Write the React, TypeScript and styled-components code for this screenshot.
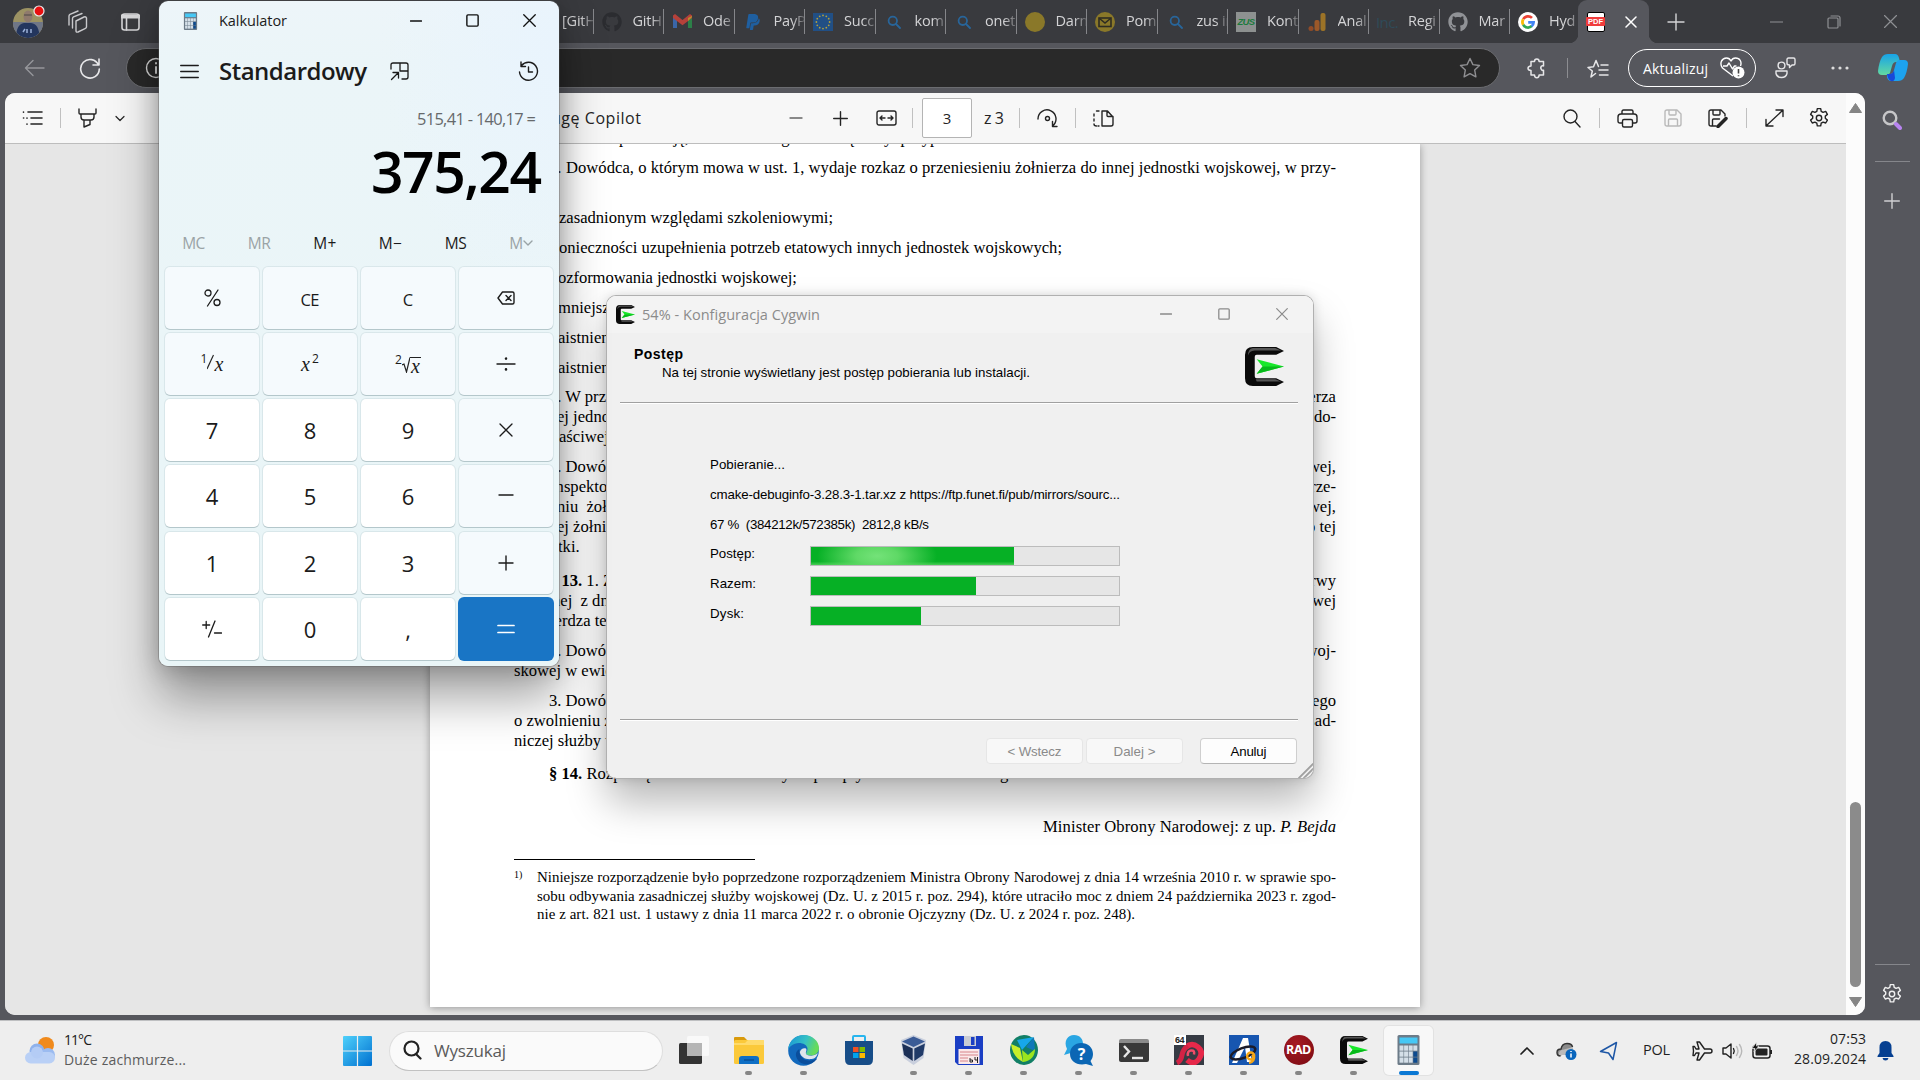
import React, { useLayoutEffect, useRef, useState } from "react";
import styled, { createGlobalStyle, css } from "styled-components";
import { FaGithub, FaPaypal } from "react-icons/fa";

const UI = `"Open Sans", "Noto Sans", sans-serif`;
const SANS = `"Liberation Sans", Arial, sans-serif`;
const SERIF = `"Liberation Serif", "Times New Roman", serif`;

const Global = createGlobalStyle`
  * { box-sizing: border-box; }
  body { margin: 0; background: #56575d; overflow: hidden; }
  svg { display: block; flex: none; }
`;

/* ---------- text that is tracked to a given width ---------- */
const FitSpan = styled.span<{ $w: number }>`
  display: block;
  flex: none;
  width: ${p => p.$w}px;
  white-space: pre;
`;
const Inner = styled.span`
  display: inline-block;
  white-space: pre;
`;
function Fit({ w, children }: { w: number; children: React.ReactNode }) {
  const ref = useRef<HTMLSpanElement>(null);
  const [track, setTrack] = useState(0);
  useLayoutEffect(() => {
    const el = ref.current;
    if (!el) return;
    const n = (el.textContent || "").length;
    setTrack((w - el.getBoundingClientRect().width) / Math.max(1, n - 1));
  }, [w]);
  return (
    <FitSpan $w={w}>
      <Inner ref={ref} style={{ letterSpacing: track }}>{children}</Inner>
    </FitSpan>
  );
}

/* ---------- shared ---------- */
const Slot = styled.div<{ $w: number; $h?: number }>`
  flex: none;
  width: ${p => p.$w}px;
  height: ${p => (p.$h ? p.$h + "px" : "100%")};
  display: flex;
  align-items: center;
  justify-content: center;
`;
const Space = styled.div<{ $w: number }>`
  flex: none;
  width: ${p => p.$w}px;
`;
const Grow = styled.div`
  flex: 1;
`;
function Ico({ w = 24, h, vb, c = "currentColor", sw = 1.4, children }: any) {
  const hh = h ?? w;
  return (
    <svg width={w} height={hh} viewBox={vb ?? `0 0 ${w} ${hh}`} fill="none" stroke={c} strokeWidth={sw} strokeLinecap="round" strokeLinejoin="round">
      {children}
    </svg>
  );
}

const Screen = styled.div`
  position: relative;
  width: 1920px;
  height: 1080px;
  overflow: hidden;
  display: flex;
  flex-direction: column;
  background: #56575d;
  font-family: ${UI};
`;

/* ---------- browser tabs ---------- */
const TabStrip = styled.div`
  flex: none;
  height: 43px;
  display: flex;
  align-items: center;
  background: #393a3e;
  color: #d4d4d6;
`;
const Tab = styled.div<{ $w: number }>`
  flex: none;
  width: ${p => p.$w}px;
  height: 25px;
  display: flex;
  align-items: center;
  border-right: ${p => (p.$w > 69 ? "1px solid #85868a" : "none")};
`;
const TabIcon = styled.div`
  flex: none;
  width: 20px;
  height: 20px;
  margin-left: 8px;
  display: flex;
  align-items: center;
  justify-content: center;
`;
const TabText = styled.div`
  flex: 1;
  margin-left: 11px;
  overflow: hidden;
  white-space: nowrap;
  font-size: 14.5px;
  line-height: 20px;
  padding-bottom: 1px;
  letter-spacing: -0.2px;
  mask-image: linear-gradient(90deg, #000 60%, rgba(0, 0, 0, 0.25));
`;
const ActiveTab = styled.div`
  flex: none;
  width: 71px;
  height: 43px;
  display: flex;
  align-items: center;
  padding: 0 12px 0 9px;
  justify-content: space-between;
  background: #56575d;
  border-radius: 9px 9px 0 0;
  position: relative;
  &::before,
  &::after {
    content: "";
    position: absolute;
    bottom: 0;
    width: 9px;
    height: 9px;
  }
  &::before {
    left: -9px;
    background: radial-gradient(circle at 0 0, transparent 9px, #56575d 9.5px);
  }
  &::after {
    right: -9px;
    background: radial-gradient(circle at 100% 0, transparent 9px, #56575d 9.5px);
  }
`;
const ZusMark = styled.div`
  width: 20px;
  height: 20px;
  background: #8d9190;
  color: #1b7a3c;
  font: italic 700 9.5px/20px ${SANS};
  text-align: center;
  letter-spacing: -0.6px;
`;
const IncMark = styled.div`
  font: 15px/20px ${UI};
  color: #2f4a59;
  letter-spacing: -0.6px;
`;
const PdfMark = styled.div`
  width: 18px;
  height: 20px;
  background: #fff;
  border: 1.5px solid #000;
  border-radius: 2px;
  display: flex;
  align-items: center;
  justify-content: center;
`;
const PdfLabel = styled.span`
  flex: none;
  width: 19px;
  height: 9px;
  background: #f03c3c;
  color: #fff;
  font: 700 7.5px/9.5px ${SANS};
  text-align: center;
  border-radius: 1px;
`;

const Magnifier = ({ c = "#28659a", s = 14 }) => (
  <Ico w={s} vb="0 0 14 14" c={c} sw={1.8}><circle cx="5.8" cy="5.8" r="4.2" /><path d="M9 9l4 4" /></Ico>
);
const Gmail = () => (
  <svg width="19" height="15" viewBox="0 0 19 15">
    <path d="M0 2v12h4V5z" fill="#3a66a8" /><path d="M19 2v12h-4V5z" fill="#2c8048" />
    <path d="M0 1.5L2 0l7.5 6L17 0l2 1.5V4l-9.500 7.200L0 4z" fill="#b5413a" /><path d="M15 4l4-2V3l-4 4z" fill="#b8922b" />
  </svg>
);
const EuFlag = () => (
  <svg width="20" height="20" viewBox="0 0 20 20">
    <rect y="1" width="20" height="18" fill="#214f85" />
    {Array.from({ length: 12 }, (_, i) => (
      <circle key={i} cx={10 + 6.6 * Math.cos((i * Math.PI) / 6)} cy={10 + 6.6 * Math.sin((i * Math.PI) / 6)} r="0.9" fill="#b3a03c" />
    ))}
  </svg>
);
const Analytics = () => (
  <svg width="18" height="20" viewBox="0 0 18 20">
    <circle cx="3" cy="16.500" r="2.500" fill="#8f4b28" /><rect x="6.500" y="8" width="5" height="11" rx="2" fill="#9b5829" /><rect x="12.500" y="1" width="5" height="18" rx="2" fill="#9c7327" />
  </svg>
);
const Google = () => (
  <svg width="20" height="20" viewBox="0 0 20 20" fill="none" strokeWidth="2.700">
    <circle cx="10" cy="10" r="10" fill="#fff" />
    <path d="M14 5.900A5.600 5.600 0 0 0 5.200 7.200" stroke="#ea4335" /><path d="M5.200 7.200a5.600 5.600 0 0 0 0 5.600" stroke="#fbbc05" />
    <path d="M5.200 12.800a5.600 5.600 0 0 0 8.600 1.300" stroke="#34a853" /><path d="M13.600 14.200A5.600 5.600 0 0 0 15.600 10.300H10.200" stroke="#4285f4" />
  </svg>
);
const Yellow = ({ mail = false }) => (
  <svg width="20" height="20" viewBox="0 0 20 20">
    <circle cx="10" cy="10" r="10" fill="#8a7829" />
    {mail && <g fill="none" stroke="#2e2c22" strokeWidth="1.600"><rect x="4" y="6" width="12" height="8.500" /><path d="M4.500 6.500l5.500 4.500 5.500-4.500" /></g>}
  </svg>
);

const tabs: [React.ReactNode, string][] = [
  [null, "[GitH"],
  [<FaGithub size={20} color="#2b2c30" />, "GitH"],
  [<Gmail />, "Ode"],
  [<FaPaypal size={18} color="#1f5fa0" />, "PayP"],
  [<EuFlag />, "Succ"],
  [<Magnifier />, "kom"],
  [<Magnifier />, "onet"],
  [<Yellow />, "Darm"],
  [<Yellow mail />, "Pom"],
  [<Magnifier />, "zus in"],
  [<ZusMark>ZUS</ZusMark>, "Kont"],
  [<Analytics />, "Anal"],
  [<IncMark>Inc.</IncMark>, "Regi"],
  [<FaGithub size={20} color="#909296" />, "Mar"],
  [<Google />, "Hyd"],
];

const Avatar = () => (
  <svg width="34" height="34" viewBox="0 0 34 34">
    <defs><clipPath id="av"><circle cx="15" cy="18" r="15" /></clipPath></defs>
    <g clipPath="url(#av)">
      <rect width="34" height="34" fill="#9c9263" /><rect y="17" width="34" height="17" fill="#6f7687" />
      <path d="M3 34c0-11 3-15 8-16h7c6 1 8 5 9 16z" fill="#24365e" />
      <ellipse cx="15" cy="11.500" rx="4.500" ry="6" fill="#8f7a6d" /><path d="M11 10h8" stroke="#4b4646" /><path d="M10 27l2-3M14 28v-4M18 28v-4" stroke="#9bb0d8" strokeWidth="1.500" />
    </g>
    <circle cx="26" cy="6" r="5" fill="#e81010" stroke="#e9e9ea" strokeWidth="1.200" />
  </svg>
);

/* ---------- browser toolbar ---------- */
const NavBar = styled.div`
  flex: none;
  height: 50px;
  display: flex;
  align-items: center;
  background: #56575d;
  color: #e6e6e8;
`;
const Address = styled.div`
  flex: none;
  width: 1374px;
  height: 40px;
  border-radius: 20px;
  background: #292929;
  border: 1px solid #6b6c70;
  display: flex;
  align-items: center;
  justify-content: space-between;
  padding: 0 18px 0 18px;
`;
const Divider = styled.div<{ $c: string; $h?: number }>`
  flex: none;
  width: 1px;
  height: ${p => p.$h ?? 20}px;
  background: ${p => p.$c};
`;
const UpdatePill = styled.div`
  flex: none;
  width: 128px;
  height: 38px;
  border: 1.5px solid #fff;
  border-radius: 19px;
  display: flex;
  align-items: center;
  justify-content: space-between;
  padding: 0 10px 0 14px;
  color: #fff;
  font-size: 14px;
`;

/* ---------- content ---------- */
const Middle = styled.div`
  flex: none;
  height: 927px;
  display: flex;
  padding-left: 5px;
`;
const Frame = styled.div`
  flex: none;
  width: 1860px;
  height: 922px;
  border-radius: 10px;
  overflow: hidden;
  display: flex;
  background: #e6e6e6;
`;
const Reader = styled.div`
  flex: none;
  width: 1841px;
  display: flex;
  flex-direction: column;
`;
const PdfBar = styled.div`
  flex: none;
  height: 51px;
  display: flex;
  align-items: center;
  background: #f7f7f7;
  border-bottom: 1px solid #bdbdbd;
  color: #242424;
  font-size: 16px;
`;
const PageBox = styled.div`
  flex: none;
  width: 50px;
  height: 40px;
  border: 1px solid #b4b4b4;
  border-radius: 2px;
  background: #fff;
  display: flex;
  align-items: center;
  justify-content: center;
  font-size: 15px;
`;
const Canvas = styled.div`
  flex: 1;
  overflow: hidden;
  padding-left: 425px;
  background: #e6e6e6;
`;
const Page = styled.div`
  width: 990px;
  height: 863px;
  background: #fff;
  box-shadow: 0 1px 8px rgba(0, 0, 0, 0.35);
  padding: 0 84px;
  overflow: hidden;
  font-family: ${SERIF};
  font-size: 16.6px;
  line-height: 20px;
  color: #000;
`;
const PageFlow = styled.div`
  margin-top: -16px;
  display: flex;
  flex-direction: column;
`;
const Line = styled.div<{ $gap?: number; $x?: number }>`
  flex: none;
  height: 20px;
  margin-top: ${p => p.$gap ?? 0}px;
  padding-left: ${p => (p.$x ?? 514) - 514}px;
  display: flex;
  justify-content: space-between;
  white-space: pre;
`;
const Rule = styled.div`
  width: 241px;
  height: 1px;
  margin-top: 22px;
  background: #000;
`;
const Footnote = styled.div`
  display: flex;
  margin-top: 8px;
  font-size: 14.95px;
  line-height: 18.7px;
`;
const NoteMark = styled.div`
  width: 23px;
  font-size: 10px;
  line-height: 13px;
`;
const NoteText = styled.div`
  flex: 1;
  white-space: nowrap;
`;
const Justified = styled.div`
  text-align-last: justify;
`;
const ScrollBar = styled.div`
  flex: 1;
  background: #fcfcfc;
  display: flex;
  flex-direction: column;
  align-items: center;
  padding: 10px 0 8px;
`;
const Thumb = styled.div`
  width: 11px;
  height: 185px;
  margin-bottom: 10px;
  border-radius: 6px;
  background: #8b8b8b;
`;
const Sidebar = styled.div`
  flex: 1;
  display: flex;
  flex-direction: column;
  align-items: center;
  padding-right: 1px;
  color: #d0d0d2;
`;
const SideRule = styled.div`
  width: 35px;
  height: 1px;
  background: #85868b;
`;
const SideSlot = styled.div<{ $h: number; $pt?: number }>`
  height: ${p => p.$h}px;
  padding-top: ${p => p.$pt ?? 0}px;
  display: flex;
  align-items: center;
`;

type Row = { gap: number; x: number; l: React.ReactNode; r?: string; w?: number };
const rows: Row[] = [
  { gap: 10, x: 566, l: "Dowódca, o którym mowa w ust. 1, wydaje rozkaz o przeniesieniu żołnierza do innej jednostki wojskowej, w przy-", w: 770 },
  { gap: 0, x: 514, l: "padku:" },
  { gap: 10, x: 559, l: "zasadnionym względami szkoleniowymi;", w: 274 },
  { gap: 10, x: 559, l: "onieczności uzupełnienia potrzeb etatowych innych jednostek wojskowych;", w: 503 },
  { gap: 10, x: 558, l: "ozformowania jednostki wojskowej;", w: 239 },
  { gap: 10, x: 558, l: "mniejsz" },
  { gap: 10, x: 558, l: "aistnien" },
  { gap: 10, x: 558, l: "aistnien" },
  { gap: 9, x: 549, l: "3. W prz", r: "żołnierza" },
  { gap: 0, x: 557, l: "ej jednos", r: "do-" },
  { gap: 0, x: 559, l: "aściwej" },
  { gap: 10, x: 549, l: "4. Dowódc", r: "wojskowej," },
  { gap: 0, x: 551, l: "inspektora", r: "prze-" },
  { gap: 0, x: 557, l: "niu  żołni", r: "wojskowej," },
  { gap: 0, x: 557, l: "ej żołnie", r: "do tej" },
  { gap: 0, x: 558, l: "tki." },
  { gap: 14, x: 549, l: <><b>§ 13.</b> 1. Z</>, r: "rezerwy" },
  { gap: 0, x: 552, l: "nej  z dni", r: "wojskowej" },
  { gap: 0, x: 550, l: "ierdza ter" },
  { gap: 10, x: 549, l: "2. Dowódc", r: "woj-" },
  { gap: 0, x: 514, l: "skowej w ewide" },
  { gap: 10, x: 549, l: "3. Dowódc", r: "wojskowego" },
  { gap: 0, x: 514, l: "o zwolnieniu ż", r: "zasad-" },
  { gap: 0, x: 514, l: "niczej służby w" },
  { gap: 13, x: 549, l: <><b>§ 14.</b> Rozporządzenie wchodzi w życie po upływie 14 dni od dnia ogłoszenia.</>, w: 518 },
];

const Gear = ({ s = 22, c = "currentColor" }) => (
  <Ico w={s} vb="0 0 22 22" c={c} sw={1.4}>
    <circle cx="11" cy="11" r="2.700" />
    <path d="M9.300 1.600h3.400l.5 2.700 1.900 1.100 2.600-1 1.700 3-2.100 1.700v2.200l2.100 1.800-1.700 2.900-2.600-.9-1.900 1.100-.5 2.700H9.300l-.5-2.700-1.900-1.100-2.600.9-1.700-2.900 2.100-1.800V9.100L2.600 7.400l1.700-3 2.600 1 1.900-1.100z" />
  </Ico>
);

/* ---------- calculator ---------- */
const CalcWindow = styled.div`
  position: absolute;
  left: 159px;
  top: 1px;
  width: 400px;
  height: 665px;
  border-radius: 9px;
  display: flex;
  flex-direction: column;
  color: #1b1b1b;
  background: radial-gradient(ellipse 180px 260px at 100% 8%, #e9f4fd 0%, rgba(233, 244, 253, 0) 100%), linear-gradient(180deg, #edf5f9 0, #ebf5f8 60px, #e9f5f7 100%);
  box-shadow: 0 0 0 1px rgba(90, 90, 90, 0.35), 0 2px 22px rgba(0, 0, 0, 0.22), 0 32px 48px rgba(0, 0, 0, 0.36);
`;
const CalcTitle = styled.div`
  flex: none;
  height: 40px;
  display: flex;
  align-items: center;
  padding: 0 1px 1px 24px;
  font-size: 14.5px;
`;
const CalcHead = styled.div`
  flex: none;
  height: 60px;
  display: flex;
  align-items: center;
  padding-left: 21px;
`;
const Mode = styled.div`
  font-size: 24px;
  font-weight: 600;
  line-height: 32px;
`;
const Expression = styled.div`
  flex: none;
  height: 36px;
  padding-right: 23px;
  display: flex;
  justify-content: flex-end;
  align-items: center;
  font-size: 16.4px;
  line-height: 22px;
  color: #66696b;
`;
const Result = styled.div`
  flex: none;
  height: 72px;
  padding: 0 17px 4px 0;
  display: flex;
  justify-content: flex-end;
  align-items: center;
  font-size: 57px;
  font-weight: 600;
  line-height: 60px;
  color: #000;
`;
const Memory = styled.div`
  flex: none;
  height: 57.5px;
  padding: 14px 5px 0 2px;
  display: grid;
  grid-template-columns: repeat(6, 1fr);
  font-size: 15.5px;
`;
const MemKey = styled.div<{ $off?: boolean }>`
  display: flex;
  align-items: center;
  justify-content: center;
  height: 40px;
  color: ${p => (p.$off ? "#9aa3a6" : "#1b1b1b")};
`;
const Keys = styled.div`
  flex: none;
  display: grid;
  grid-template-columns: repeat(4, 94px);
  grid-auto-rows: 62px;
  gap: 4.3px 4px;
  padding-left: 6px;
`;
const Key = styled.div<{ $kind: string }>`
  display: flex;
  align-items: center;
  justify-content: center;
  border-radius: 5px;
  box-shadow: 0 0 0 1px rgba(0, 60, 70, 0.07), 0 1px 0 rgba(0, 40, 50, 0.17);
  background: #f5fafd;
  font-size: 16.5px;
  ${p => p.$kind === "n" && css`background: #fff; font-size: 22px;`}
  ${p => p.$kind === "t" && css`padding-top: 3px;`}
  ${p => p.$kind === "=" && css`background: #1975c5; color: #fff; box-shadow: 0 0 0 1px #1975c5;`}
`;
const Math_ = styled.span`
  display: flex;
  font: italic 20px/24px ${SERIF};
`;
const Sup = styled.span`
  font: 12px/14px ${UI};
`;
const RootX = styled.span`
  border-top: 1.3px solid #222;
  line-height: 17px;
  height: 18px;
  margin-top: 4px;
  padding: 0 1px;
`;

const CalcGlyph = ({ w, h }: { w: number; h: number }) => (
  <svg width={w} height={h} viewBox="0 0 22 30">
    <rect width="22" height="30" rx="1.500" fill="#6c7b88" />
    <rect x="2" y="2.500" width="18" height="6" fill="#46c8f5" />
    {[0, 1, 2, 3].map(c => [0, 1, 2].map(r => (
      <rect key={`${c}${r}`} x={2 + c * 4.600} y={10.500 + r * 6} width="4" height="5.200" fill={c === 3 && r > 0 ? "#0c4a8f" : "#d4dfe8"} />
    )))}
  </svg>
);

/* ---------- Cygwin dialog ---------- */
const Dialog = styled.div`
  position: absolute;
  left: 607px;
  top: 296px;
  width: 706px;
  height: 482px;
  border-radius: 9px;
  overflow: hidden;
  background: #f0f0f0;
  display: flex;
  flex-direction: column;
  font-family: ${SANS};
  font-size: 13.3px;
  color: #000;
`;
const DialogShadow = styled.div`
  position: absolute;
  left: 607px;
  top: 296px;
  width: 706px;
  height: 482px;
  border-radius: 9px;
  box-shadow: 0 0 0 1px #b0b0b0, 0 0 12px rgba(0, 0, 0, 0.16), 0 24px 40px rgba(0, 0, 0, 0.28);
`;
const DlgTitle = styled.div`
  flex: none;
  height: 37px;
  display: flex;
  align-items: center;
  padding: 0 2px 1px 9px;
  background: #f3f3f3;
  color: #8b8b8b;
  font-family: ${UI};
  font-size: 14.5px;
`;
const DlgHead = styled.div`
  flex: none;
  height: 69px;
  margin-left: 27px;
  padding-right: 29px;
  display: flex;
  justify-content: space-between;
`;
const Heading = styled.div`
  padding-top: 12px;
  font-weight: 700;
  font-size: 14px;
  line-height: 18px;
`;
const SubHeading = styled.div`
  margin-top: 1px;
  padding-left: 28px;
  font-weight: 400;
  font-size: 13.3px;
  line-height: 18px;
`;
const Groove = styled.div`
  flex: none;
  height: 2px;
  margin: 0 15px 0 13px;
  border-top: 1px solid #a0a0a0;
  border-bottom: 1px solid #fff;
`;
const DlgBody = styled.div`
  flex: none;
  height: 315px;
  padding: 46px 0 0 103px;
`;
const DlgText = styled.div`
  height: 30px;
  line-height: 30px;
`;
const BarRow = styled.div`
  height: 30px;
  display: flex;
`;
const BarName = styled.div`
  width: 100px;
  line-height: 28px;
`;
const Track = styled.div`
  width: 310px;
  height: 20px;
  margin-top: 6px;
  border: 1px solid #bcbcbc;
  background: #e6e6e6;
`;
const Fill = styled.div<{ $w: number; $shine?: boolean }>`
  width: ${p => p.$w}px;
  height: 18px;
  background: #06b025;
  ${p => p.$shine && css`
    background: radial-gradient(ellipse 60px 26px at 66px 50%, #74e279 0%, #5fd966 35%, rgba(6, 176, 37, 0) 100%),
      linear-gradient(180deg, transparent 80%, rgba(95, 217, 102, 0.75) 100%), #06b025;
  `}
`;
const DlgFoot = styled.div`
  flex: 1;
  display: flex;
  justify-content: flex-end;
  padding: 17px 16px 0 0;
`;
const Btn = styled.div<{ $off?: boolean; $ml: number }>`
  width: 97px;
  height: 26px;
  margin-left: ${p => p.$ml}px;
  border-radius: 4px;
  border: 1px solid ${p => (p.$off ? "#e6e6e6" : "#cfcfcf")};
  border-bottom-color: ${p => (p.$off ? "#e6e6e6" : "#b4b4b4")};
  background: ${p => (p.$off ? "#f8f8f8" : "#fdfdfd")};
  color: ${p => (p.$off ? "#8a8a8a" : "#000")};
  display: flex;
  align-items: center;
  justify-content: center;
`;
const Grip = styled.div`
  position: absolute;
  right: 0;
  bottom: 0;
`;
const CygwinLogo = ({ w, h }: { w: number; h: number }) => (
  <svg width={w} height={h} viewBox="0 0 40 40">
    <path d="M8 0h24l8 4-8 4H12q-2 0-2 2v20q0 2 2 2h20l8 4-8 4H8q-8 0-8-8V8q0-8 8-8z" fill="#0a0a0a" />
    <path d="M8 1h23l6 2.500H10Q4 4 3 9q0-7 5-8zM11 33h20l6 2.500H12z" fill="#555" />
    <path d="M12 12.500l28 7.500-28 7.500 6-7.500z" fill="#18e82a" /><path d="M18 20l22 0-28 7.500z" fill="#07b91a" />
  </svg>
);

/* ---------- taskbar ---------- */
const TaskBar = styled.div`
  flex: none;
  height: 60px;
  display: flex;
  align-items: center;
  background: #eeeeee;
  border-top: 1px solid #bfc0c2;
  color: #1f1f1f;
`;
const Weather = styled.div`
  flex: none;
  width: 128px;
  padding-bottom: 2px;
  font-size: 14px;
  line-height: 20px;
  color: #5c5c5c;
`;
const Dark = styled.div`
  color: #1a1a1a;
`;
const Lang = styled.div`
  padding-bottom: 2px;
  font-size: 14.5px;
`;
const Search = styled.div`
  flex: none;
  width: 274px;
  height: 40px;
  border-radius: 20px;
  background: #fafafa;
  border: 1px solid #dedede;
  border-bottom-color: #c2c2c2;
  display: flex;
  align-items: center;
  padding: 0 0 1px 13px;
  gap: 12px;
  font-size: 17px;
  color: #5a5a5a;
`;
const App_ = styled.div<{ $active?: boolean }>`
  flex: none;
  width: 49px;
  height: 49px;
  margin: 0 3px;
  border-radius: 5px;
  display: flex;
  flex-direction: column;
  align-items: center;
  padding-top: 9px;
  ${p => p.$active && css`background: #f8f8f8; box-shadow: 0 0 0 1px #e2e2e2;`}
`;
const AppGlyph = styled.div`
  height: 30px;
  display: flex;
  align-items: center;
`;
const Dot = styled.div<{ $kind: number }>`
  width: ${p => (p.$kind === 2 ? 20 : 7)}px;
  height: 4px;
  margin-top: 6px;
  border-radius: 2px;
  background: ${p => ["transparent", "#868686", "#0a78d4"][p.$kind]};
`;
const Clock = styled.div`
  flex: none;
  width: 73px;
  padding-bottom: 3px;
  display: flex;
  flex-direction: column;
  align-items: flex-end;
  font-size: 14px;
  line-height: 20px;
`;
const RadMark = styled.div`
  width: 30px;
  height: 30px;
  border-radius: 50%;
  background: radial-gradient(circle at 40% 30%, #a51a22, #7a0a12);
  color: #fff;
  font: 700 12.5px/30px ${UI};
  text-align: center;
  letter-spacing: -0.4px;
`;
const DebTile = styled.div`
  position: relative;
  width: 30px;
  height: 30px;
  background: #363b44;
`;
const Bits = styled.span`
  position: absolute;
  left: 0;
  top: 0;
  width: 12px;
  height: 10px;
  background: #fff;
  color: #222;
  font: 700 9px/10px ${SANS};
  text-align: center;
  letter-spacing: -0.5px;
`;
const TermTile = styled.div`
  width: 30px;
  height: 23px;
  border-radius: 2px;
  border-top: 4px solid #8a8a8a;
  background: #383838;
`;

const apps: [React.ReactNode, number][] = [
  [<svg width="30" height="30" viewBox="0 0 30 30"><rect y="8" width="23" height="21" rx="1.500" fill="#333" /><rect x="8" y="1" width="22" height="20" rx="1.500" fill="#fafafa" fillOpacity="0.9" /><rect x="8" y="8" width="15" height="13" fill="#b5b5b5" /></svg>, 0],
  [<svg width="30" height="30" viewBox="0 0 30 30"><path d="M0 3q0-1 1-1h9l3 3v4H0z" fill="#d99a0b" /><rect y="5" width="30" height="24" rx="1.500" fill="#fbc93a" /><path d="M0 8h11l3-3h15q1 0 1 1v4H0z" fill="#ffdb6b" /><path d="M5 29v-5q0-3 3-3h14q3 0 3 3v5z" fill="#0f6fc5" /><path d="M10 25h10" stroke="#0a4f97" strokeWidth="1.500" /></svg>, 1],
  [<svg width="31" height="31" viewBox="0 0 31 31"><defs><linearGradient id="e1" x1="0" y1="0" x2="1" y2="0.300"><stop offset="0" stopColor="#1793d8" /><stop offset="0.600" stopColor="#35c1c4" /><stop offset="1" stopColor="#66db5b" /></linearGradient></defs><circle cx="15.500" cy="15.500" r="15.300" fill="#1269bd" /><path d="M0 15C1 5 8 0 16 0s15 6 15 13c0 5-4 7.500-8 7.500-3 0-5-1-5-2s1.500-2 1.500-4.500C19.500 10 15 8 11 8 5 8 1 12 0 15z" fill="url(#e1)" /><path d="M11.500 14c-1 6 3 11.500 9.500 11.500 3 0 5-.5 7.500-2 .5 0 .5.4 0 1-7 8-17.500 5-20-2-1.500-4 0-7 3-8.500z" fill="#0b4e9c" /><path d="M11.800 17c1-3 3.500-4.500 6.200-3.500 1 1.500 0 2.700-.2 4.500 0 2 3 3 6 2.700 2.500-.3 4.500-1.200 6-2.700-1 4-3 5.500-6 6-6 .8-11-1.500-12-7z" fill="#eee" fillOpacity="0.930" /></svg>, 1],
  [<svg width="28" height="30" viewBox="0 0 28 30"><path d="M8 7V2q0-1 1-1h10q1 0 1 1v5" fill="none" stroke="#27b5ee" strokeWidth="2" /><path d="M0 6h28v18q0 6-5 6H5q-5 0-5-6z" fill="#174d88" /><rect x="8" y="12" width="5.500" height="5" fill="#f05123" /><rect x="14.500" y="12" width="5.500" height="5" fill="#7fbb00" /><rect x="8" y="18" width="5.500" height="5" fill="#00a3ee" /><rect x="14.500" y="18" width="5.500" height="5" fill="#fdb900" /></svg>, 0],
  [<svg width="27" height="30" viewBox="0 0 27 30"><path d="M13.500 0L26 5l-2.500 18-10 7-10-7L1 5z" fill="#c9cfdd" /><path d="M13.500 1.500L25 6.500l-11.500 5.500L2 6.500z" fill="#3a5b96" /><path d="M2 8.500L12.700 13.500V26l-8.700-6z" fill="#1b2f56" /><path d="M25 8.500l-10.700 5V26l8.700-6z" fill="#203a68" /></svg>, 1],
  [<svg width="28" height="29" viewBox="0 0 28 29"><path d="M0 0h28v29H3l-3-3z" fill="#1a3ec4" /><rect x="9" width="12" height="10" fill="#c9ccd4" /><rect x="16" y="1" width="3.500" height="8" fill="#1a3ec4" /><rect x="3.500" y="13" width="21" height="15" fill="#fbe9e9" /><path d="M5 16h18M5 19h18M5 22h8M5 25h8" stroke="#d7848a" /><path d="M15 22v4h2.500v-2H15M20 21v3h3M22.500 21v6" stroke="#222" fill="none" /></svg>, 1],
  [<svg width="28" height="30" viewBox="0 0 28 30"><ellipse cx="14" cy="15" rx="14" ry="15" fill="#127f66" /><path d="M1 9l9 4 3 14C6 24 2 17 1 9z" fill="#c8ee2a" /><path d="M7 5l17-3-12 13z" fill="#17a7ea" /><path d="M24 2l1 14-9-4z" fill="#0f78b9" /><path d="M25 14c0 7-4 12-12 13l-1-12 6 5z" fill="#9be51e" /></svg>, 1],
  [<svg width="31" height="31" viewBox="0 0 31 31"><path d="M1 20L4 14C0 6 5 0 11 0s9 4 9 9-4 8-9 8z" fill="#2aa6e3" /><path d="M18 8c7 0 12 4.500 12 11 0 3-1 5-2.500 7l2.500 5-7-2c-9 2-16-3-16-10S12 8 18 8z" fill="#0b66b4" /><text x="18.500" y="25" fontSize="16" fontWeight="700" fontFamily="Open Sans" fill="#fff" textAnchor="middle">?</text></svg>, 1],
  [<TermTile><svg width="30" height="19" viewBox="0 0 30 19"><path d="M5 3l5 5.500L5 14" fill="none" stroke="#e6e6e6" strokeWidth="2.400" /><path d="M13 15h11" stroke="#e6e6e6" strokeWidth="2.400" /></svg></TermTile>, 1],
  [<DebTile><svg width="30" height="30" viewBox="0 0 30 30"><path d="M12 12Q18 7 24 12T25 24 13 25" fill="none" stroke="#e6294a" strokeWidth="5.500" /><path d="M14 11Q9 14 8 20T3 28" fill="none" stroke="#d32345" strokeWidth="5" /><path d="M14 21q-1-5 3-5.500t3 4" fill="none" stroke="#f04c69" strokeWidth="2.500" /></svg><Bits>64</Bits></DebTile>, 1],
  [<svg width="30" height="30" viewBox="0 0 30 30"><rect width="30" height="30" fill="#1756b0" /><path d="M3 28L14 3h5l4 24h-5l-2-15-8 16z" fill="#fff" /><ellipse cx="14" cy="18" rx="13" ry="5" transform="rotate(-20 14 18)" fill="none" stroke="#1b1b2a" strokeWidth="2.500" /><path d="M25 22a3.500 3.500 0 1 0-3.500 2.500q4 0 2-5M25 20q1 7-5 8" fill="none" stroke="#f6a617" strokeWidth="2.500" /></svg>, 1],
  [<RadMark>RAD</RadMark>, 1],
  [<CygwinLogo w={28} h={30} />, 1],
  [<CalcGlyph w={23} h={30} />, 2],
];

const keys: [string, React.ReactNode][] = [
  ["f", <Ico w={17} h={18} sw={1.300}><circle cx="4" cy="4" r="3" /><circle cx="13" cy="13.500" r="3" /><path d="M14 1L3.500 17" /></Ico>],
  ["t", <Fit w={19}>CE</Fit>],
  ["t", "C"],
  ["f", <Ico w={18} h={14} sw={1.400}><path d="M5.500 1H15.500q1.500 0 1.500 1.500v9q0 1.500-1.500 1.500H5.500L1 7zM9 4.500l5 5M14 4.500l-5 5" /></Ico>],
  ["f", <Math_><Sup>1</Sup><svg width="7" height="18" viewBox="0 0 7 18"><path d="M6.500 3L0 17" stroke="#222" strokeWidth="1.200" /></svg>x</Math_>],
  ["f", <Math_>x<Space $w={2} /><Sup>2</Sup></Math_>],
  ["f", <Math_><Sup>2</Sup><svg width="8" height="20" viewBox="0 0 8 20"><path d="M0 12l2-1 2.500 8L8 4.500" stroke="#222" fill="none" strokeWidth="1.200" /></svg><RootX>x</RootX></Math_>],
  ["f", <Ico w={20} h={14} sw={1.400}><path d="M1 7h18" /><circle cx="10" cy="1.600" r="0.600" /><circle cx="10" cy="12.400" r="0.600" /></Ico>],
  ["n", "7"], ["n", "8"], ["n", "9"],
  ["f", <Ico w={14} sw={1.300}><path d="M1 1l12 12M13 1L1 13" /></Ico>],
  ["n", "4"], ["n", "5"], ["n", "6"],
  ["f", <Ico w={16} h={4} sw={1.400}><path d="M1 1h14" /></Ico>],
  ["n", "1"], ["n", "2"], ["n", "3"],
  ["f", <Ico w={16} sw={1.400}><path d="M1 8h14M8 1v14" /></Ico>],
  ["n", <Ico w={20} h={18} sw={1.300}><path d="M0.700 5h7M4.200 1.500v7M13 1L6.500 17M12.500 13h7" /></Ico>],
  ["n", "0"], ["n", ","],
  ["=", <Ico w={18} h={10} sw={1.700}><path d="M1 1.500h16M1 8.500h16" /></Ico>],
];

const WinControls = ({ slot, c = "currentColor", max = 12, xs = 12 }: any) => (
  <>
    <Slot $w={slot}><Ico w={12} h={2} c={c} sw={1.3}><path d="M0.500 1h11" /></Ico></Slot>
    <Slot $w={slot}><Ico w={max} vb="0 0 12 12" c={c} sw={1.3}><rect x="0.800" y="0.800" width="10.400" height="10.400" rx="1" /></Ico></Slot>
    <Slot $w={slot}><Ico w={xs} vb="0 0 12 12" c={c} sw={1.200}><path d="M0.700 0.700l10.600 10.600M11.300 0.700L0.700 11.300" /></Ico></Slot>
  </>
);

export default function App() {
  return (
    <Screen>
      <Global />
      <TabStrip>
        <Space $w={13} />
        <Avatar />
        <Space $w={20} />
        <Ico w={22} h={25} c="#c9c9cc" sw={1.4}><path d="M9 12l8-4q2-.6 2.500 1v9q0 1-1.500 1.700L11 23q-2 .5-2-1zM5.500 19V9.500q0-1 1-1.600L15 4.500M2 16V7q0-1 1-1.600L11 2" /></Ico>
        <Space $w={32} />
        <Ico w={19} h={18} c="#d5d5d7" sw={1.600}><rect x="1" y="1" width="17" height="16" rx="2.500" /><path d="M1 3.500h17" strokeWidth="4" /><path d="M5.500 5v12" /></Ico>
        <Space $w={383} />
        {tabs.map(([icon, label], i) => (
          <Tab key={i} $w={i === 14 ? 67.5 : 70.5}>
            <TabIcon>{icon}</TabIcon>
            <TabText>{label}</TabText>
          </Tab>
        ))}
        <ActiveTab>
          <PdfMark><PdfLabel>PDF</PdfLabel></PdfMark>
          <Ico w={12} c="#fff" sw={1.5}><path d="M1 1l10 10M11 1L1 11" /></Ico>
        </ActiveTab>
        <Slot $w={55}><Ico w={18} sw={1.4}><path d="M1 9h16M9 1v16" /></Ico></Slot>
        <Grow />
        <Slot $w={57}><Ico w={13} h={2} c="#8f9094" sw={1.200}><path d="M0.500 1h12" /></Ico></Slot>
        <Slot $w={57}><Ico w={14} c="#8f9094" sw={1.200}><rect x="1" y="3" width="10" height="10" rx="1" /><path d="M4 1h7q2 0 2 2v8" /></Ico></Slot>
        <Slot $w={57}><Ico w={13} c="#8f9094" sw={1.200}><path d="M0.500 0.500l12 12M12.500 0.500l-12 12" /></Ico></Slot>
        <Space $w={1} />
      </TabStrip>
      <NavBar>
        <Space $w={24} />
        <Ico w={22} h={18} c="#96979b"><path d="M20 9H1.500M9 1.500L1.500 9l7.500 7.500" /></Ico>
        <Space $w={33} />
        <Ico w={22} c="#e8e8ea" sw={1.600}><path d="M19.500 8A9.300 9.300 0 1 0 20.300 12M20 2v6h-6" /></Ico>
        <Space $w={25} />
        <Address>
          <Ico w={22} c="#d8d8d8"><circle cx="11" cy="11" r="9.500" /><path d="M11 10v6M11 6v.5" strokeWidth="2" /></Ico>
          <Ico w={22} c="#8f8f92" sw={1.400}><path d="M11 1.500l2.900 6.100 6.600.9-4.800 4.600 1.200 6.700L11 16.600l-5.900 3.200 1.200-6.700L1.500 8.500l6.600-.9z" /></Ico>
        </Address>
        <Space $w={27} />
        <Ico w={20} h={21} sw={1.500}><path d="M4 3.500h3.500q0-2.500 2.300-2.500t2.300 2.500h4.400v4.400q-1-.6-2 .2-1.600 1.900.2 3.800.8.8 1.800.3v4.800h-4.400q0 2.700-2.300 2.700t-2.300-2.700H4v-4.500Q1 12.300 1 10.200t3-2.300z" /></Ico>
        <Space $w={20} />
        <Divider $c="#8c8d91" />
        <Slot $w={60}><Ico w={22} h={21} sw={1.500}><path d="M8.500 15.500L4 19l1.300-6L1 9.500l5.500-.8L9 2.500l2.500 6M14 7h7M12 12h9M12.500 17h8.500" /></Ico></Slot>
        <UpdatePill>
          <Fit w={65}>Aktualizuj</Fit>
          <svg width="25" height="22" viewBox="0 0 25 22"><g fill="none" stroke="#fff" strokeWidth="1.400" strokeLinejoin="round"><path d="M13 19L2.500 11C-1 6 2 1 6.500 1 9 1 10.500 3 11 4c.5-1 2-3 4.500-3 4.500 0 6.500 4 5 8M3 9h4l2-3 3.500 6 2-3h2" /></g><circle cx="18.500" cy="15.500" r="6" fill="#fff" /><path d="M18.500 12v4.500M18.500 18.300v1" stroke="#444" strokeWidth="1.600" /></svg>
        </UpdatePill>
        <Slot $w={58}><Ico w={22} h={22} sw={1.400}><circle cx="7.500" cy="8.500" r="3.400" /><path d="M2 14h11v2.500q-1 4-5.500 4T2 16.500zM13 2.500q0-1.500 1.500-1.500h5Q21 1 21 2.500v4Q21 8 19.500 8H18l-2.500 2.500V8q-2.500 0-2.500-1.500z" /></Ico></Slot>
        <Slot $w={52}><svg width="18" height="4" viewBox="0 0 18 4" fill="#ddd"><circle cx="2" cy="2" r="1.600" /><circle cx="9" cy="2" r="1.600" /><circle cx="16" cy="2" r="1.600" /></svg></Slot>
        <Slot $w={54}>
          <svg width="30" height="28" viewBox="0 0 30 28"><defs><linearGradient id="cp" x1="0" y1="0" x2="0" y2="1"><stop offset="0" stopColor="#17a3e8" /><stop offset="1" stopColor="#63d9a1" /></linearGradient></defs><path d="M10 0h7q3 0 4 4l1 4h-4q-3 0-4 4l-2 7q-1 2-4 2H4q-4 0-4-4Q1 8 4 3q2-3 6-3z" fill="url(#cp)" /><path d="M20 27h-7q-3 0-4-4v-3h3q3 0 4-4l2-7q1-3 4-3h4q4 0 4 4-1 9-4 14-2 3-6 3z" fill="#1da2ee" /><path d="M9 20h3q3 0 4-4l1 8q-1 4-4 3-3-1-4-7z" fill="#1848d8" /></svg>
        </Slot>
      </NavBar>
      <Middle>
        <Frame>
          <Reader>
            <PdfBar>
              <Space $w={17} />
              <Ico w={21} h={16} sw={1.600}><path d="M6 2h14M9 8h11M9 14h11M1.500 2v.2M1.500 8h.2M5 8v.2M5 14v.2" /></Ico>
              <Space $w={17} />
              <Divider $c="#c0c0c0" />
              <Space $w={17} />
              <Ico w={19} h={21}><path d="M1 1v4q0 1 1 1h15q1 0 1-1V1M3 6v3q0 3 3 3h7q3 0 3-3V6M6 12v7l6-2.500V12" /></Ico>
              <Space $w={18} />
              <Ico w={10} h={8} sw={1.200}><path d="M1 2.500l4 4 4-4" /></Ico>
              <Space $w={426} />
              <Fit w={90}>ugę Copilot</Fit>
              <Space $w={148} />
              <Ico w={14} h={2} c="#666"><path d="M1 1h12" /></Ico>
              <Space $w={30} />
              <Ico w={15}><path d="M0.700 7.500h13.600M7.500 0.700v13.600" /></Ico>
              <Space $w={28} />
              <Ico w={21} h={16}><rect x="1" y="1" width="19" height="14" rx="2" /><path d="M9 8H4.500M12 8h4.500M6 6L4 8l2 2M15 6l2 2-2 2" /></Ico>
              <Space $w={15} />
              <Divider $c="#c0c0c0" />
              <Space $w={9} />
              <PageBox>3</PageBox>
              <Space $w={12} />
              <Fit w={20}>z 3</Fit>
              <Space $w={15} />
              <Divider $c="#c0c0c0" />
              <Slot $w={55}><Ico w={22} h={21}><path d="M1 11A9 9 0 1 1 15.500 18M15.500 13.500V18.500H20" /><circle cx="10.500" cy="10.500" r="2" /></Ico></Slot>
              <Divider $c="#c0c0c0" />
              <Slot $w={55}><Ico w={21} h={17}><path d="M9 1v15h9q2 0 2-2V7l-5.500-6H9M14 1v4.500q0 1 1 1h5M6 1H3.500M1 4v2M1 9v2M1 14q0 2 2.500 2M6 16H5" /></Ico></Slot>
              <Grow />
              <Ico w={18} h={19}><circle cx="7.500" cy="7.500" r="6.500" /><path d="M12 12.500l5 5.500" /></Ico>
              <Space $w={18} />
              <Divider $c="#c0c0c0" />
              <Slot $w={56}><Ico w={21} h={19}><path d="M5 5V2.500Q5 1 6.500 1h8Q16 1 16 2.500V5M5 14H3q-2 0-2-2V8q0-3 3-3h13q3 0 3 3v4q0 2-2 2h-2" /><rect x="5.500" y="10.500" width="10" height="7.500" rx="1.500" /></Ico></Slot>
              <Slot $w={34}><Ico w={18} c="#b9b9b9"><path d="M1 3q0-2 2-2h10l4 4v10q0 2-2 2H3q-2 0-2-2zM5 1v4q0 1 1 1h5q1 0 1-1V1M4.500 17v-6q0-1 1-1h7q1 0 1 1v6" /></Ico></Slot>
              <Slot $w={56}><Ico w={20} h={19}><path d="M8 17H3q-2 0-2-2V3q0-2 2-2h10l4 4v2M5 1v4q0 1 1 1h5q1 0 1-1V1M4.500 17v-6q0-1 1-1h6" /><path d="M18 9.500L10 17.500" strokeWidth="3.500" /></Ico></Slot>
              <Divider $c="#c0c0c0" />
              <Slot $w={55}><Ico w={19} h={18}><path d="M1.500 16.500l16-15M11 1h7v6.500M1 10.500V17h7" /></Ico></Slot>
              <Slot $w={34}><Gear /></Slot>
              <Space $w={10.5} />
            </PdfBar>
            <Canvas>
              <Page>
                <PageFlow>
                  <Line $x={619}>
                    <Fit w={70}>publikację,</Fit><Space $w={24} /><span>o treści na</span><span>głów  zwią</span><Space $w={30} /><span>y  przypadku</span><Space $w={366} />
                  </Line>
                  {rows.map((r, i) => (
                    <Line key={i} $gap={r.gap} $x={i === 0 ? 549 : r.x}>
                      {i === 0 && <span>2.</span>}
                      {r.w ? <Fit w={r.w}>{r.l}</Fit> : <span>{r.l}</span>}
                      {r.r && <span>{r.r}</span>}
                    </Line>
                  ))}
                  <Line $gap={33} $x={1043}>
                    <Fit w={293}>Minister Obrony Narodowej: z up. <i>P. Bejda</i></Fit>
                  </Line>
                  <Rule />
                  <Footnote>
                    <NoteMark>1)</NoteMark>
                    <NoteText>
                      <Justified>Niniejsze rozporządzenie było poprzedzone rozporządzeniem Ministra Obrony Narodowej z dnia 14 września 2010 r. w sprawie spo-</Justified>
                      <Justified>sobu odbywania zasadniczej służby wojskowej (Dz. U. z 2015 r. poz. 294), które utraciło moc z dniem 24 października 2023 r. zgod-</Justified>
                      <Fit w={598}>nie z art. 821 ust. 1 ustawy z dnia 11 marca 2022 r. o obronie Ojczyzny (Dz. U. z 2024 r. poz. 248).</Fit>
                    </NoteText>
                  </Footnote>
                </PageFlow>
              </Page>
            </Canvas>
          </Reader>
          <ScrollBar>
            <svg width="13" height="10" viewBox="0 0 13 10"><path d="M6.500 0.500L12.500 9.500H0.500z" fill="#858585" stroke="#858585" strokeLinejoin="round" /></svg>
            <Grow />
            <Thumb />
            <svg width="13" height="10" viewBox="0 0 13 10"><path d="M6.500 9.500L12.500 0.500H0.500z" fill="#858585" stroke="#858585" strokeLinejoin="round" /></svg>
          </ScrollBar>
        </Frame>
        <Sidebar>
          <SideSlot $h={54}><Ico w={20} c="#c6c6c8" sw={2.400}><circle cx="8" cy="8" r="6.300" /><path d="M14 14l4 4" stroke="#b884f0" strokeWidth="4" /></Ico></SideSlot>
          <SideSlot $h={14} />
          <SideRule />
          <SideSlot $h={78}><Ico w={16}><path d="M0.700 8h14.600M8 0.700v14.600" /></Ico></SideSlot>
          <Grow />
          <SideRule />
          <SideSlot $h={55} $pt={3}><Gear s={22} c="#f0f0f0" /></SideSlot>
        </Sidebar>
      </Middle>
      <TaskBar>
        <Space $w={24} />
        <svg width="32" height="27" viewBox="0 0 32 27"><circle cx="22" cy="8" r="8" fill="#f08a1c" /><circle cx="13" cy="14" r="7.500" fill="#8fb2ec" /><circle cx="24" cy="18" r="7" fill="#9bbbf0" /><rect x="1" y="15" width="30" height="11.500" rx="5.700" fill="#b9d0f6" /><circle cx="13" cy="15.500" r="6" fill="#b4ccf5" /></svg>
        <Space $w={8} />
        <Weather>
          <Dark><Fit w={28}>11°C</Fit></Dark>
          <Fit w={122}>Duże zachmurze...</Fit>
        </Weather>
        <Space $w={151} />
        <svg width="29" height="30" viewBox="0 0 29 30"><defs><linearGradient id="wl" gradientUnits="userSpaceOnUse" x1="0" y1="0" x2="29" y2="30"><stop offset="0" stopColor="#4fd1fb" /><stop offset="1" stopColor="#0070d0" /></linearGradient></defs><path d="M0 1q0-1 1-1h12.900v14.400H0zM15.100 0H28q1 0 1 1v13.400H15.100zM0 15.600h13.900V30H1q-1 0-1-1zM15.100 15.600H29V29q0 1-1 1H15.100z" fill="url(#wl)" /></svg>
        <Space $w={17} />
        <Search>
          <Ico w={19} h={20} c="#222" sw={2.200}><circle cx="8.500" cy="8.500" r="7" /><path d="M13 14l4.500 4.500" /></Ico>
          <Fit w={72}>Wyszukaj</Fit>
        </Search>
        <Space $w={3} />
        {apps.map(([g, k], i) => (
          <App_ key={i} $active={k === 2}>
            <AppGlyph>{g}</AppGlyph>
            <Dot $kind={k} />
          </App_>
        ))}
        <Grow />
        <Ico w={14} h={8} sw={1.700}><path d="M1 7l6-6 6 6" /></Ico>
        <Slot $w={65}>
          <svg width="21" height="18" viewBox="0 0 21 18"><path d="M4.500 14Q1 14 1 10.500T5 7q1-5.500 6-5.500T16.500 5" fill="#8b8b8b" stroke="#333" strokeWidth="1.400" /><path d="M3 13Q2 8 8 7.500L17 5v8z" fill="#bbb" /><circle cx="15" cy="12.500" r="5.500" fill="#0a66bd" /><path d="M15 11.500v4M15 9v1" stroke="#fff" strokeWidth="1.500" /></svg>
        </Slot>
        <Ico w={19} h={20} c="#1d56a5" sw={1.500}><path d="M17.500 1.500L14 18.500 9.500 12 1.500 10.500z" /></Ico>
        <Space $w={25} />
        <Lang><Fit w={27}>POL</Fit></Lang>
        <Space $w={22} />
        <Ico w={21} h={20} sw={1.400}><path d="M7 8L5 1h2.500l5 7H18q2 0 2 2t-2 2h-5.500l-5 7H5l2-7H4l-1.500 2.500H1L1.500 10 1 5.500h1.500L4 8z" /></Ico>
        <Space $w={9} />
        <Ico w={21} h={18} sw={1.400}><path d="M1 6v6h3l5 4V2L4 6z" /><path d="M11.500 6.500q1.500 2.500 0 5" /><path d="M14.500 4.500q3 4.500 0 9M17.500 2.500q4.500 6.500 0 13" stroke="#b8b8b8" /></Ico>
        <Space $w={9} />
        <svg width="21" height="18" viewBox="0 0 21 18"><rect x="1" y="4" width="17" height="12" rx="2.500" fill="none" stroke="#222" strokeWidth="1.500" /><rect x="3.500" y="6.500" width="12" height="7" rx="1" fill="#222" /><path d="M19 8v4" stroke="#222" strokeWidth="2" /><path d="M4.500 0L0 6.500h3L2 10l5-6H4.500z" fill="#111" stroke="#eee" strokeWidth="0.700" /></svg>
        <Space $w={20} />
        <Clock>
          <Fit w={36}>07:53</Fit>
          <Fit w={72}>28.09.2024</Fit>
        </Clock>
        <Space $w={11} />
        <svg width="17" height="20" viewBox="0 0 17 20"><path d="M8.500 0q6 0 6 6.500V12l2 3v1H0.500v-1l2-3V6.500Q2.500 0 8.500 0zM5.500 17h6q-.5 2.500-3 2.500t-3-2.500z" fill="#053f91" /></svg>
        <Space $w={26} />
      </TaskBar>

      <DialogShadow />
      <Dialog>
        <DlgTitle>
          <CygwinLogo w={19} h={19} />
          <Space $w={7} />
          <Fit w={178}>54% - Konfiguracja Cygwin</Fit>
          <Grow />
          <WinControls slot={58} />
        </DlgTitle>
        <DlgHead>
          <Heading>
            <Fit w={49}>Postęp</Fit>
            <SubHeading><Fit w={368}>Na tej stronie wyświetlany jest postęp pobierania lub instalacji.</Fit></SubHeading>
          </Heading>
          <Slot $w={40} $h={66}><CygwinLogo w={39} h={39} /></Slot>
        </DlgHead>
        <Groove />
        <DlgBody>
          <DlgText><Fit w={75}>Pobieranie...</Fit></DlgText>
          <DlgText><Fit w={410}>cmake-debuginfo-3.28.3-1.tar.xz z https://ftp.funet.fi/pub/mirrors/sourc...</Fit></DlgText>
          <DlgText><Fit w={219}>67 %  (384212k/572385k)  2812,8 kB/s</Fit></DlgText>
          <BarRow><BarName><Fit w={45}>Postęp:</Fit></BarName><Track><Fill $w={203} $shine /></Track></BarRow>
          <BarRow><BarName><Fit w={46}>Razem:</Fit></BarName><Track><Fill $w={165} /></Track></BarRow>
          <BarRow><BarName><Fit w={34}>Dysk:</Fit></BarName><Track><Fill $w={110} /></Track></BarRow>
        </DlgBody>
        <Groove />
        <DlgFoot>
          <Btn $off $ml={0}><Fit w={54}>&lt; Wstecz</Fit></Btn>
          <Btn $off $ml={3}><Fit w={42}>Dalej &gt;</Fit></Btn>
          <Btn $ml={17}><Fit w={36}>Anuluj</Fit></Btn>
        </DlgFoot>
        <Grip><Ico w={15} c="#a0a0a0" sw={1.800}><path d="M1 15L15 1M6 15l9-9M11 15l4-4" /></Ico></Grip>
      </Dialog>

      <CalcWindow>
        <CalcTitle>
          <CalcGlyph w={15} h={18} />
          <Space $w={21} />
          <Fit w={68}>Kalkulator</Fit>
          <Grow />
          <WinControls slot={57} c="#111" max={13} xs={13} />
        </CalcTitle>
        <CalcHead>
          <Ico w={19} h={15} sw={1.300}><path d="M0.700 1.500h17.600M0.700 7.500h17.600M0.700 13.500h17.600" /></Ico>
          <Space $w={20} />
          <Mode><Fit w={148}>Standardowy</Fit></Mode>
          <Space $w={23} />
          <Ico w={19} sw={1.300}><path d="M1 7V3q0-2 2-2h13q2 0 2 2v12q0 2-2 2h-4M10 1v8h8M1.500 17.500L8 11M3 10.500h5.500V16" /></Ico>
          <Grow />
          <Ico w={21} h={21} sw={1.400}><path d="M3.500 4.500A9 9 0 1 1 1.500 11M3 1v4.500h4.500M10.500 6v5h4" /></Ico>
          <Space $w={20} />
        </CalcHead>
        <Expression><Fit w={119}>515,41 - 140,17 =</Fit></Expression>
        <Result><Fit w={171}>375,24</Fit></Result>
        <Memory>
          <MemKey $off><Fit w={23}>MC</Fit></MemKey>
          <MemKey $off><Fit w={23}>MR</Fit></MemKey>
          <MemKey><Fit w={23}>M+</Fit></MemKey>
          <MemKey><Fit w={23}>M−</Fit></MemKey>
          <MemKey><Fit w={22}>MS</Fit></MemKey>
          <MemKey $off>M<Ico w={10} h={6}><path d="M1 1l4 4 4-4" /></Ico></MemKey>
        </Memory>
        <Keys>
          {keys.map(([k, c], i) => <Key key={i} $kind={k}>{c}</Key>)}
        </Keys>
      </CalcWindow>
    </Screen>
  );
}
